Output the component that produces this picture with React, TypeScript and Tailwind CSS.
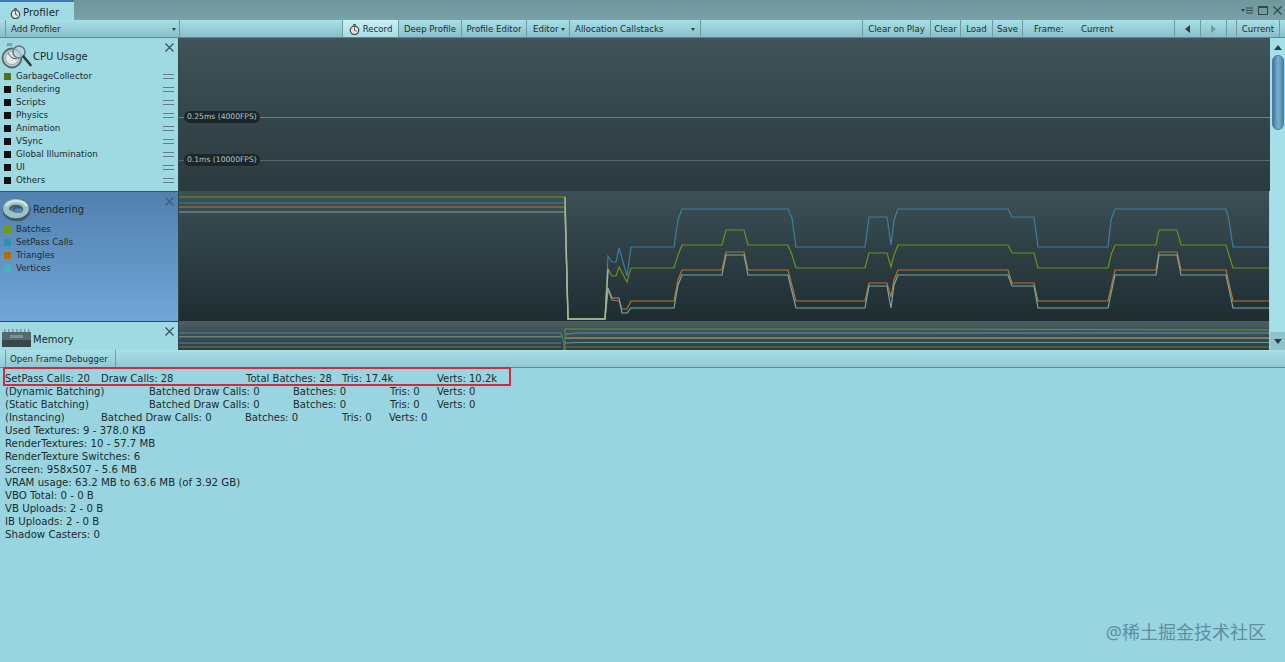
const font = "font-['DejaVu_Sans',sans-serif]"

const cpuItems = ["GarbageCollector", "Rendering", "Scripts", "Physics", "Animation", "VSync", "Global Illumination", "UI", "Others"]

const renderingItems = [
  { label: "Batches", color: "bg-[#6f9a12]" },
  { label: "SetPass Calls", color: "bg-[#2f8fb0]" },
  { label: "Triangles", color: "bg-[#a8700f]" },
  { label: "Vertices", color: "bg-[#3fb5c0]" },
]

// chart coords are page coords minus the chart's origin (179,191)
const toPoints = (pts: number[][]) => pts.map(([x, y]) => `${x - 179},${y - 191}`).join(" ")

const setPass = [[179, 203], [565, 203], [568, 319], [605, 319], [608, 256], [612, 262], [616, 262], [619, 248], [627, 276], [631, 247], [674, 247], [678, 220], [682, 209], [788, 209], [792, 218], [796, 247], [865, 247], [869, 217], [887, 217], [891, 245], [894, 220], [898, 209], [1008, 209], [1012, 217], [1034, 217], [1038, 247], [1108, 247], [1111, 220], [1115, 209], [1226, 209], [1229, 220], [1233, 247], [1269, 247]]
const batches = [[179, 197], [565, 197], [568, 319], [605, 319], [608, 269], [612, 276], [616, 276], [619, 267], [627, 282], [631, 268], [674, 268], [678, 255], [682, 245], [722, 245], [726, 230], [744, 230], [748, 245], [788, 245], [792, 255], [796, 268], [865, 268], [869, 253], [887, 253], [891, 267], [894, 255], [898, 245], [1008, 245], [1012, 253], [1034, 253], [1038, 268], [1108, 268], [1111, 255], [1115, 245], [1156, 245], [1159, 230], [1177, 230], [1181, 245], [1226, 245], [1229, 255], [1233, 268], [1269, 268]]
const triangles = [[179, 207], [565, 207], [568, 319], [605, 319], [608, 290], [612, 300], [619, 301], [622, 309], [627, 309], [631, 301], [674, 301], [678, 280], [682, 270], [722, 270], [726, 252], [744, 252], [748, 270], [788, 270], [796, 301], [865, 301], [869, 283], [887, 283], [891, 297], [894, 280], [898, 270], [1008, 270], [1012, 283], [1034, 283], [1038, 301], [1108, 301], [1115, 270], [1156, 270], [1159, 252], [1177, 252], [1181, 270], [1226, 270], [1233, 301], [1269, 301]]
const vertices = [[179, 212], [565, 212], [568, 319], [605, 319], [608, 288], [612, 298], [619, 298], [622, 313], [627, 313], [631, 308], [674, 308], [678, 285], [682, 275], [722, 275], [726, 255], [744, 255], [748, 275], [788, 275], [796, 308], [865, 308], [869, 286], [887, 286], [891, 308], [894, 285], [898, 275], [1008, 275], [1012, 286], [1034, 286], [1038, 308], [1108, 308], [1115, 275], [1156, 275], [1159, 255], [1177, 255], [1181, 275], [1226, 275], [1233, 308], [1269, 308]]

function Stopwatch({ size = 13 }: { size?: number }) {
  return (
    <svg width={size} height={size} viewBox="0 0 13 13" className="shrink-0">
      <rect x="5" y="0" width="3" height="2" fill="#555" />
      <circle cx="6.5" cy="7.5" r="5" fill="#dfe7e8" stroke="#4a4a4a" strokeWidth="1.5" />
      <path d="M6.5 7.5V4" stroke="#a0392b" strokeWidth="1.2" />
      <path d="M6.5 7.5L9 8.5" stroke="#333" strokeWidth="1" />
    </svg>
  )
}

function CpuIcon() {
  return (
    <svg width="31" height="26" viewBox="0 0 31 26" className="shrink-0">
      <rect x="6" y="0" width="5" height="3" fill="#8b9a9c" />
      <circle cx="11" cy="15" r="9.5" fill="#b9cbce" stroke="#566a6e" strokeWidth="1.8" />
      <circle cx="11" cy="15" r="6.5" fill="#e2ebec" stroke="#8ea1a4" strokeWidth="0.8" />
      <path d="M11 15L7 10M11 15L16 16" stroke="#6a4a50" strokeWidth="1" />
      <circle cx="18" cy="9" r="6" fill="#b8d8e2" fillOpacity="0.7" stroke="#66797e" strokeWidth="1.6" />
      <path d="M22.5 13.5L29.5 22" stroke="#2f3a3d" strokeWidth="2.6" strokeLinecap="round" />
    </svg>
  )
}

function TorusIcon() {
  return (
    <svg width="29" height="23" viewBox="0 0 29 23" className="shrink-0">
      <ellipse cx="14.5" cy="12" rx="10" ry="7.5" fill="none" stroke="#3f5d63" strokeWidth="8" />
      <ellipse cx="14" cy="10.5" rx="10" ry="6.8" fill="none" stroke="#9cc2c7" strokeWidth="6" />
      <path d="M4 8C8 1.5 20 1.5 25 8" fill="none" stroke="#cfe3e6" strokeWidth="2.2" />
      <ellipse cx="16" cy="11.5" rx="5.2" ry="3.6" fill="#3d5c66" />
      <ellipse cx="16.5" cy="12.7" rx="4" ry="2.4" fill="#5586b4" />
    </svg>
  )
}

function ChipIcon() {
  return (
    <svg width="31" height="20" viewBox="0 0 31 20" className="shrink-0">
      <path d="M3 1.5h1.5M7 1.5h1.5M11 1.5h1.5M15 1.5h1.5M19 1.5h1.5M23 1.5h1.5M27 1.5h1.5" stroke="#7f989c" strokeWidth="3" />
      <rect x="1" y="3" width="29" height="11" fill="#56696d" />
      <rect x="1" y="11" width="29" height="7" fill="#37484c" />
      <rect x="9" y="6" width="13" height="3" fill="#7f9397" />
    </svg>
  )
}

function CloseX({ dim }: { dim?: boolean }) {
  return (
    <svg width="9" height="9" viewBox="0 0 9 9" className="absolute right-[4px] top-[5px]">
      <path d="M0.5 0.5L8.5 8.5M8.5 0.5L0.5 8.5" stroke={dim ? "#3f5f7d" : "#3a5357"} strokeWidth="1.2" />
    </svg>
  )
}

function Drag() {
  return <div className="h-[5px] w-[11px] border-y border-[#5f7f85] mr-[4px]" />
}

function Caret() {
  return <span className="w-0 h-0 border-x-[2.5px] border-x-transparent border-t-[3px] border-t-[#2f3f42]" />
}

function ToolBtn({ label, className = "" }: { label: string; className?: string }) {
  return <div className={`h-full flex items-center justify-center pt-px border-r border-[#6e9aa2] ${className}`}>{label}</div>
}

function Toolbar() {
  return (
    <div className="h-[18px] flex items-center text-[8.6px] whitespace-nowrap text-[#1d2b2e] bg-gradient-to-b from-[#a9e0e8] to-[#87bfc9] border-b border-[#5f8a91] shrink-0">
      <div className="ml-[5px] w-[175px] h-full flex items-center justify-between border-x border-[#6e9aa2] pl-[5px] pr-[3px] pt-px">
        Add Profiler
        <Caret />
      </div>
      <div className="flex-1" />
      <div className="w-[57px] h-full flex items-center justify-center gap-[3px] pt-px bg-gradient-to-b from-[#c9f1f5] to-[#a6dde6] border-x border-[#6e9aa2]">
        <Stopwatch size={11} />
        Record
      </div>
      <ToolBtn label="Deep Profile" className="w-[63px]" />
      <ToolBtn label="Profile Editor" className="w-[65px]" />
      <div className="w-[43px] h-full flex items-center justify-between pl-[6px] pr-[4px] pt-px border-r border-[#6e9aa2]">
        Editor
        <Caret />
      </div>
      <div className="w-[131px] h-full flex items-center justify-between pl-[5px] pr-[5px] pt-px border-r border-[#6e9aa2]">
        Allocation Callstacks
        <Caret />
      </div>
      <div className="w-[162px] h-full border-r border-[#6e9aa2]" />
      <ToolBtn label="Clear on Play" className="w-[68px]" />
      <ToolBtn label="Clear" className="w-[30px]" />
      <ToolBtn label="Load" className="w-[32px]" />
      <ToolBtn label="Save" className="w-[30px]" />
      <div className="w-[152px] h-full flex items-center border-r border-[#6e9aa2] pl-[11px] pt-px">
        <span className="w-[47px]">Frame:</span>
        <span>Current</span>
      </div>
      <div className="w-[26px] h-full flex items-center justify-center border-r border-[#6e9aa2]">
        <span className="w-0 h-0 border-y-[4px] border-y-transparent border-r-[5px] border-r-[#2f3f42]" />
      </div>
      <div className="w-[26px] h-full flex items-center justify-center border-r border-[#6e9aa2]">
        <span className="w-0 h-0 border-y-[4px] border-y-transparent border-l-[5px] border-l-[#6f9aa2]" />
      </div>
      <div className="w-[10px] h-full border-r border-[#6e9aa2]" />
      <ToolBtn label="Current" className="w-[43px]" />
      <div className="w-[5px]" />
    </div>
  )
}

function Scrollbar() {
  return (
    <div className="w-[15px] shrink-0 flex flex-col items-center bg-[#a5dfe7]">
      <div className="h-[17px] flex items-center justify-center shrink-0 pt-[1px]">
        <span className="w-0 h-0 border-x-[4px] border-x-transparent border-b-[5px] border-b-[#2f3f42]" />
      </div>
      <div className="w-[12px] h-[75px] rounded-[6px] bg-gradient-to-r from-[#3f78a3] via-[#7cb0d0] to-[#4a85ae] border border-[#4a7d9f] shrink-0" />
      <div className="flex-1" />
      <div className="h-[18px] w-full flex items-center justify-center bg-[#8fc4cd] shrink-0">
        <span className="w-0 h-0 border-x-[4px] border-x-transparent border-t-[5px] border-t-[#2f3f42]" />
      </div>
    </div>
  )
}

function StatRow({ cells }: { cells: [string, string][] }) {
  return (
    <div className="flex h-[13px] items-center pl-[5px] whitespace-pre">
      {cells.map(([text, w]) => (
        <span key={text} className={w}>{text}</span>
      ))}
    </div>
  )
}

export default function App() {
  return (
    <div className={`relative w-[1285px] h-[662px] overflow-hidden flex flex-col bg-[#98d5e0] text-[#1d2b2e] ${font}`}>
      {/* tab strip */}
      <div className="h-[20px] flex shrink-0 bg-gradient-to-b from-[#6f979c] to-[#78a2a8]">
        <div className="w-[74px] h-[20px] flex items-center gap-[2px] pl-[10px] pt-[4px] text-[10.3px] bg-[#a1dbe4] border-t-2 border-[#3f78b5]">
          <Stopwatch size={11} />
          Profiler
        </div>
        <div className="ml-auto flex items-center gap-[5px] pr-[3px] pt-[1px]">
          <svg width="12" height="7" viewBox="0 0 12 7">
            <path d="M0 2h4L2 5z" fill="#33474b" />
            <path d="M5 1h7M5 3.5h7M5 6h7" stroke="#33474b" strokeWidth="1" />
          </svg>
          <span className="w-[10px] h-[9px] border border-[#33474b] border-t-2" />
          <svg width="9" height="9" viewBox="0 0 9 9">
            <path d="M0.5 0.5L8.5 8.5M8.5 0.5L0.5 8.5" stroke="#33474b" strokeWidth="1.2" />
          </svg>
        </div>
      </div>

      <Toolbar />

      {/* profiler rows */}
      <div className="h-[312px] flex shrink-0">
        <div className="w-[179px] flex flex-col shrink-0 border-r border-[#33474b]">
          <div className="relative h-[153px] bg-[#9fd9e2] shrink-0">
            <CloseX />
            <div className="flex items-center gap-[1px] h-[32px] pl-[1px] pt-[4px] text-[10px]">
              <CpuIcon />
              CPU Usage
            </div>
            <div className="whitespace-nowrap">
              {cpuItems.map((item, i) => (
                <div key={item} className="flex items-center h-[13px] text-[8.7px] pl-[4px]">
                  <span className={`w-[7px] h-[7px] mr-[5px] shrink-0 ${i === 0 ? "bg-[#55701a]" : "bg-[#111]"}`} />
                  <span className="flex-1">{item}</span>
                  <Drag />
                </div>
              ))}
            </div>
          </div>
          <div className="relative h-[130px] bg-gradient-to-b from-[#4f80b0] to-[#72a6d6] border-t border-[#33536f] shrink-0">
            <CloseX dim />
            <div className="flex items-center gap-[2px] h-[31px] pl-[2px] pt-[4px] text-[10px]">
              <TorusIcon />
              Rendering
            </div>
            <div>
              {renderingItems.map((item) => (
                <div key={item.label} className="flex items-center h-[13px] text-[8.7px] pl-[4px]">
                  <span className={`w-[7px] h-[7px] mr-[5px] shrink-0 ${item.color}`} />
                  <span>{item.label}</span>
                </div>
              ))}
            </div>
          </div>
          <div className="relative flex-1 bg-[#9fd9e2] border-t border-[#33474b] overflow-hidden">
            <CloseX />
            <div className="flex items-center gap-[1px] h-[30px] pl-[1px] pt-[4px] text-[10px]">
              <ChipIcon />
              Memory
            </div>
          </div>
        </div>

        <div className="flex-1 flex flex-col min-w-0">
          <div className="relative h-[153px] shrink-0 bg-gradient-to-b from-[#3f5359] to-[#2b3a3e]">
            <div className="absolute left-0 right-0 top-[79px] h-px bg-[#6f8083]" />
            <div className="absolute left-0 right-0 top-[122px] h-px bg-[#56686b]" />
            <span className="absolute left-[5px] top-[73px] h-[12px] px-[3px] rounded-[6px] bg-[#1b2629] text-[7.6px] leading-[12px] whitespace-nowrap text-[#b9c6c8]">0.25ms (4000FPS)</span>
            <span className="absolute left-[5px] top-[116px] h-[12px] px-[3px] rounded-[6px] bg-[#1b2629] text-[7.6px] leading-[12px] whitespace-nowrap text-[#b9c6c8]">0.1ms (10000FPS)</span>
          </div>
          <svg width="1090" height="130" className="block shrink-0 bg-gradient-to-b from-[#3c5056] to-[#1f2d31]">
            <polyline points={toPoints(setPass)} fill="none" stroke="#3f7f9c" strokeWidth="1.2" />
            <polyline points={toPoints(batches)} fill="none" stroke="#6c9020" strokeWidth="1.2" />
            <polyline points={toPoints(triangles)} fill="none" stroke="#b5762a" strokeWidth="1.2" />
            <polyline points={toPoints(vertices)} fill="none" stroke="#74a8ad" strokeWidth="1.2" />
            <polyline points="386,6 389,128 426,128 429,78" fill="none" stroke="#a7b795" strokeWidth="1.4" />
          </svg>
          <svg width="1090" height="29" className="block shrink-0 bg-gradient-to-b from-[#4c5f63] to-[#2c3b3e]">
            <path d="M0 12H382L385 23V29M0 15.5H382M0 22H382" fill="none" stroke="#4d8aa3" strokeWidth="1" />
            <path d="M0 16H382M0 26H382" fill="none" stroke="#777f45" strokeWidth="1" />
            <path d="M386 29V8H700L1090 9" fill="none" stroke="#6f8f2a" strokeWidth="1" />
            <path d="M386 13L400 12H1090" fill="none" stroke="#41819f" strokeWidth="1.6" />
            <path d="M386 17H1090" fill="none" stroke="#7b7b62" strokeWidth="2" />
            <path d="M386 22L400 21.5H1090" fill="none" stroke="#5e9fb2" strokeWidth="1" />
            <path d="M386 26H1090" fill="none" stroke="#5d6637" strokeWidth="1.6" />
          </svg>
        </div>
        <Scrollbar />
      </div>

      {/* details toolbar */}
      <div className="h-[18px] shrink-0 text-[8.6px] whitespace-nowrap bg-gradient-to-b from-[#a9e0e8] to-[#90c9d3] border-b border-[#5f8a91] pl-[5px]">
        <div className="w-[111px] h-full flex items-center pl-[4px] pt-px border-x border-[#6e9aa2]">Open Frame Debugger</div>
      </div>

      {/* stats */}
      <div className="pt-[4px] text-[10px] text-[#1d2b2e]">
        <StatRow cells={[["SetPass Calls: 20", "w-[96px]"], ["Draw Calls: 28", "w-[145px]"], ["Total Batches: 28", "w-[96px]"], ["Tris: 17.4k", "w-[95px]"], ["Verts: 10.2k", ""]]} />
        <StatRow cells={[["(Dynamic Batching)", "w-[144px]"], ["Batched Draw Calls: 0", "w-[144px]"], ["Batches: 0", "w-[97px]"], ["Tris: 0", "w-[47px]"], ["Verts: 0", ""]]} />
        <StatRow cells={[["(Static Batching)", "w-[144px]"], ["Batched Draw Calls: 0", "w-[144px]"], ["Batches: 0", "w-[97px]"], ["Tris: 0", "w-[47px]"], ["Verts: 0", ""]]} />
        <StatRow cells={[["(Instancing)", "w-[96px]"], ["Batched Draw Calls: 0", "w-[144px]"], ["Batches: 0", "w-[97px]"], ["Tris: 0", "w-[47px]"], ["Verts: 0", ""]]} />
        {["Used Textures: 9 - 378.0 KB", "RenderTextures: 10 - 57.7 MB", "RenderTexture Switches: 6", "Screen: 958x507 - 5.6 MB", "VRAM usage: 63.2 MB to 63.6 MB (of 3.92 GB)", "VBO Total: 0 - 0 B", "VB Uploads: 2 - 0 B", "IB Uploads: 2 - 0 B", "Shadow Casters: 0"].map((line) => (
          <div key={line} className="flex h-[13px] items-center pl-[5px] text-[10.2px]">{line}</div>
        ))}
      </div>

      {/* highlight around the first stat row */}
      <div className="absolute left-[3px] top-[367px] w-[508px] h-[19px] border-2 border-[#d8283c] pointer-events-none" />

      <div className="absolute right-[19px] top-[621px] text-[18px] leading-[22px] text-[#5f8f9c] font-['Noto_Sans','Noto_Sans_CJK_SC',sans-serif]">@稀土掘金技术社区</div>
    </div>
  )
}
